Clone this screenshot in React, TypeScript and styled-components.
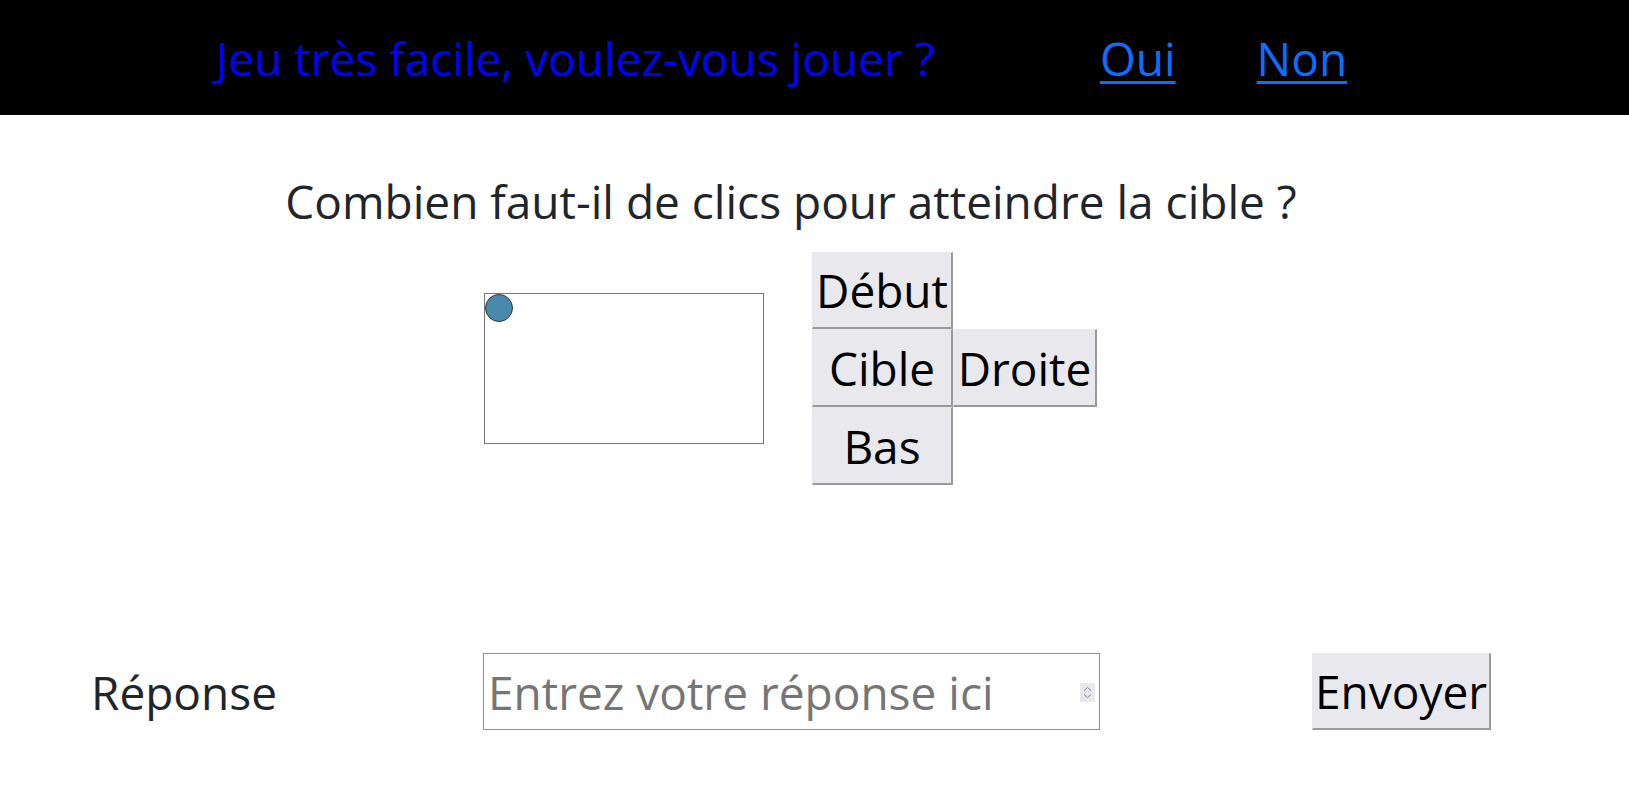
import React from "react";
import styled, { createGlobalStyle } from "styled-components";

const GlobalStyle = createGlobalStyle`
  html, body {
    margin: 0;
    padding: 0;
    background: #ffffff;
  }
  body {
    font-family: "Open Sans", "Noto Sans", sans-serif;
    color: #212529;
  }
  * { box-sizing: border-box; }
`;

const Header = styled.header`
  display: grid;
  grid-template-columns: 1100px auto;
  align-items: center;
  height: 115px;
  background: #000000;
`;

const Title = styled.div`
  padding-left: 216px;
  font-size: 46px;
  color: #0000ff;
  white-space: nowrap;
`;

const Links = styled.nav`
  display: flex;
  gap: 81px;
`;

const NavLink = styled.a`
  font-size: 46px;
  color: #0d6efd;
  text-decoration: underline;
  text-underline-offset: 5px;
  text-decoration-thickness: 3px;
  cursor: pointer;
`;

const Main = styled.main`
  display: flex;
  flex-direction: column;
`;

const Question = styled.h2`
  margin: 55px 0 0;
  padding-right: 47px;
  font-size: 46px;
  font-weight: 400;
  text-align: center;
  line-height: 63px;
  color: #212529;
`;

const GameRow = styled.section`
  display: flex;
  align-items: center;
  gap: 48px;
  margin-top: 19px;
  padding-left: 484px;
`;

const Board = styled.div`
  width: 280px;
  height: 151px;
  border: 1px solid #767676;
  background: #ffffff;
`;

const Controls = styled.div`
  display: grid;
  grid-template-columns: 141px 144px;
  grid-template-rows: 77px 78px 78px;
`;

const GameButton = styled.button<{ $col: number; $row: number }>`
  grid-column: ${(p) => p.$col};
  grid-row: ${(p) => p.$row};
  margin: 0;
  padding: 0 3px;
  font-family: "Open Sans", "Noto Sans", sans-serif;
  font-size: 46px;
  color: #000000;
  background: #e9e9ed;
  border-style: solid;
  border-width: 1px 2px 2px 1px;
  border-color: #e9e9ed #9a9a9a #9a9a9a #e9e9ed;
  white-space: nowrap;
  cursor: pointer;
`;

const AnswerRow = styled.section`
  display: grid;
  grid-template-columns: 483px 829px auto;
  align-items: center;
  margin-top: 168px;
`;

const Label = styled.label`
  padding-left: 91px;
  font-size: 46px;
  color: #212529;
`;

const Field = styled.div`
  position: relative;
  width: 617px;
  height: 77px;
`;

const NumberInput = styled.input`
  width: 100%;
  height: 100%;
  margin: 0;
  padding: 0 30px 0 4px;
  font-family: "Open Sans", "Noto Sans", sans-serif;
  font-size: 46px;
  color: #212529;
  border: 1px solid #8f8f9d;
  border-radius: 0;
  background: #ffffff;
  outline: none;
  appearance: textfield;
  -moz-appearance: textfield;
  &::placeholder {
    color: #757575;
  }
  &::-webkit-inner-spin-button,
  &::-webkit-outer-spin-button {
    -webkit-appearance: none;
    margin: 0;
  }
`;

const Spinner = styled.span`
  position: absolute;
  right: 5px;
  top: 30px;
  width: 15px;
  height: 19px;
  display: flex;
  align-items: center;
  justify-content: center;
  background: #e9e9ed;
  pointer-events: none;
`;

const SendButton = styled.button`
  justify-self: start;
  width: 179px;
  height: 77px;
  margin: 0;
  padding: 0 2px;
  font-family: "Open Sans", "Noto Sans", sans-serif;
  font-size: 46px;
  color: #000000;
  background: #e9e9ed;
  border-style: solid;
  border-width: 1px 2px 2px 1px;
  border-color: #e9e9ed #9a9a9a #9a9a9a #e9e9ed;
  cursor: pointer;
`;

export default function App() {
  return (
    <>
      <GlobalStyle />
      <Header>
        <Title>Jeu très facile, voulez-vous jouer ?</Title>
        <Links>
          <NavLink>Oui</NavLink>
          <NavLink>Non</NavLink>
        </Links>
      </Header>
      <Main>
        <Question>Combien faut-il de clics pour atteindre la cible ?</Question>
        <GameRow>
          <Board>
            <svg width="278" height="149" viewBox="0 0 278 149">
              <circle cx="14" cy="14" r="13.5" fill="#4788ab" stroke="#2b3a44" strokeWidth="1" />
            </svg>
          </Board>
          <Controls>
            <GameButton $col={1} $row={1}>Début</GameButton>
            <GameButton $col={1} $row={2}>Cible</GameButton>
            <GameButton $col={2} $row={2}>Droite</GameButton>
            <GameButton $col={1} $row={3}>Bas</GameButton>
          </Controls>
        </GameRow>
        <AnswerRow>
          <Label htmlFor="reponse">Réponse</Label>
          <Field>
            <NumberInput id="reponse" type="number" placeholder="Entrez votre réponse ici" />
            <Spinner>
              <svg width="9" height="13" viewBox="0 0 9 13">
                <path d="M1 4.5 L4.5 1.5 L8 4.5" fill="none" stroke="#8a8a8a" strokeWidth="1" />
                <path d="M1 8.5 L4.5 11.5 L8 8.5" fill="none" stroke="#8a8a8a" strokeWidth="1" />
              </svg>
            </Spinner>
          </Field>
          <SendButton>Envoyer</SendButton>
        </AnswerRow>
      </Main>
    </>
  );
}
